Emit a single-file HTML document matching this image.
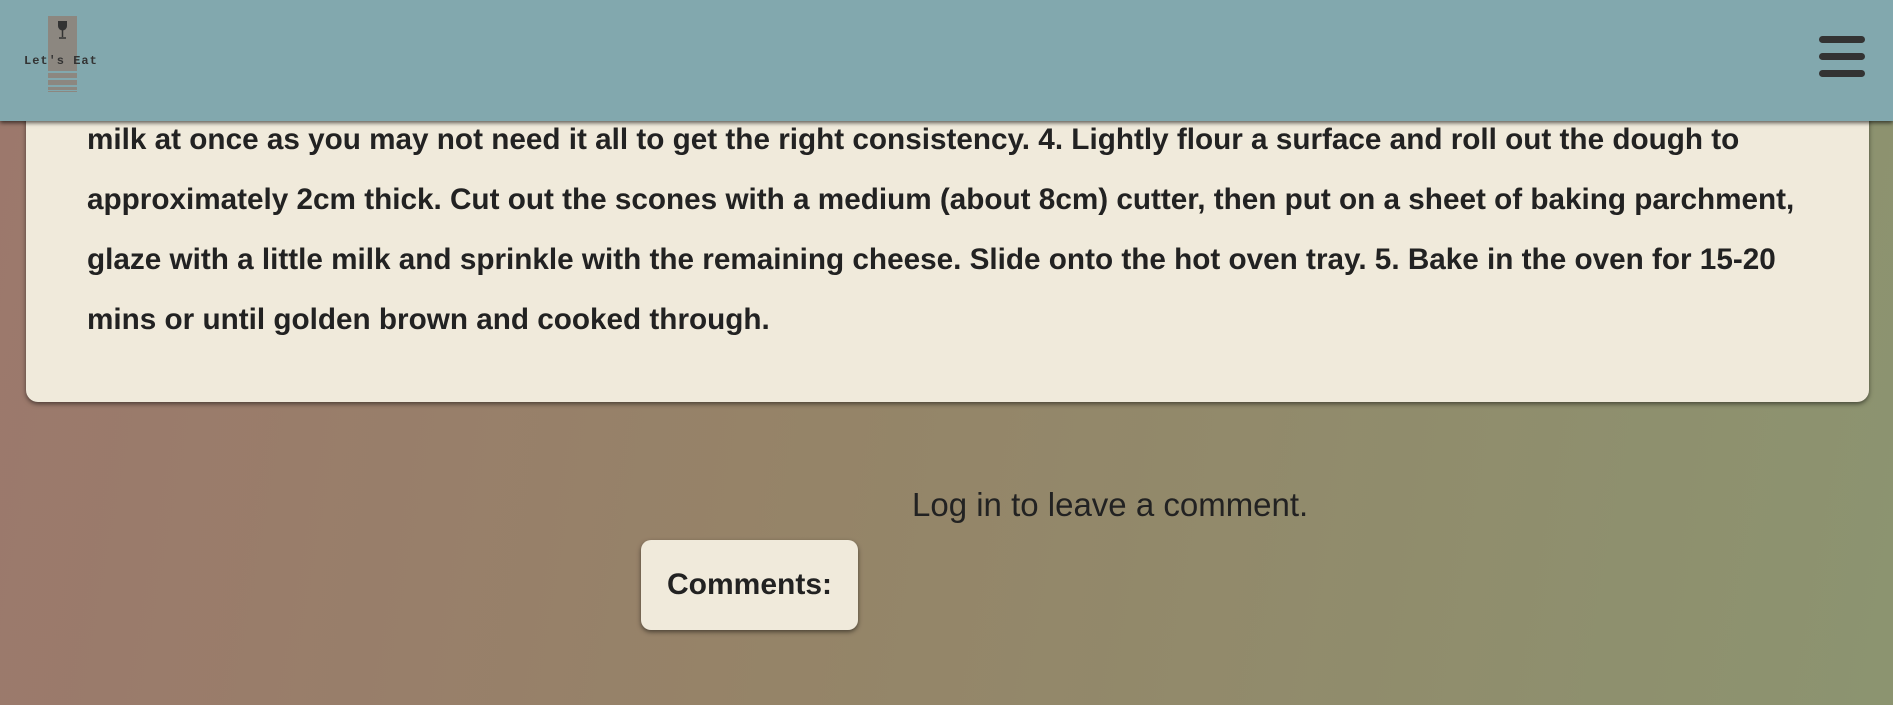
<!DOCTYPE html>
<html><head><meta charset="utf-8"><style>
html,body{margin:0;padding:0;width:1893px;height:705px;overflow:hidden}
body{background:linear-gradient(100deg,#9c786c 0%,#958468 45%,#8c9470 100%);font-family:"Liberation Sans",sans-serif;color:#222;position:relative}
.hdr{position:absolute;left:0;top:0;width:1893px;height:121px;background:#82a8ae;box-shadow:0 2px 4px rgba(0,0,0,.6);z-index:2}
.logo{position:absolute;left:48px;top:16px;width:29px;height:55px;background:#8c8780}
.ln{position:absolute;left:48px;width:29px;background:#8c8780}
.lt{position:absolute;left:24px;top:54px;font:bold 12px "Liberation Mono",monospace;color:#333;letter-spacing:1px}
.hb{position:absolute;left:1819px;width:46px;height:7px;border-radius:4px;background:#333}
.card{position:absolute;left:26px;top:60px;width:1843px;height:342px;background:#f0eadb;border-radius:12px;box-shadow:0 2px 5px rgba(0,0,0,.5)}
.txt{position:absolute;left:87px;top:110px;font-size:29.7px;font-weight:bold;line-height:60px;white-space:nowrap;color:#222;z-index:1}
.log{position:absolute;left:912px;top:486px;font-size:33px;color:#222}
.cm{position:absolute;left:641px;top:540px;width:217px;height:90px;background:#f0eadb;border-radius:10px;box-shadow:0 2px 5px rgba(0,0,0,.5);font-size:30px;font-weight:bold;line-height:90px;text-align:center}
</style></head><body>
<div class="card"></div>
<div class="txt">milk at once as you may not need it all to get the right consistency. 4. Lightly flour a surface and roll out the dough to<br>approximately 2cm thick. Cut out the scones with a medium (about 8cm) cutter, then put on a sheet of baking parchment,<br>glaze with a little milk and sprinkle with the remaining cheese. Slide onto the hot oven tray. 5. Bake in the oven for 15-20<br>mins or until golden brown and cooked through.</div>
<div class="hdr">
<div class="logo"></div>
<div class="ln" style="top:73px;height:5px"></div>
<div class="ln" style="top:80px;height:5px"></div>
<div class="ln" style="top:87px;height:3px"></div>
<div class="ln" style="top:91px;height:1px"></div>
<svg style="position:absolute;left:55px;top:20px" width="15" height="20" viewBox="0 0 15 20"><path d="M3 1h9v5a4.5 4.5 0 0 1-9 0z" fill="#333"/><path d="M7.5 10v7M4 18h7" stroke="#333" stroke-width="1.5"/></svg>
<div class="lt">Let's Eat</div>
<div class="hb" style="top:36px"></div>
<div class="hb" style="top:53px"></div>
<div class="hb" style="top:70px"></div>
</div>
<div class="log">Log in to leave a comment.</div>
<div class="cm">Comments:</div>
</body></html>
